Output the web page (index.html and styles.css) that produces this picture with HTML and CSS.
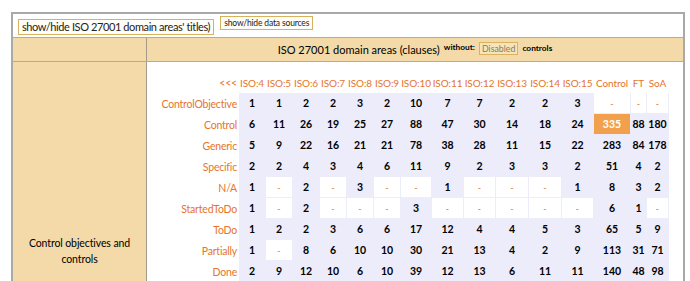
FILE: index.html
```html
<!DOCTYPE html>
<html>
<head>
<meta charset="utf-8">
<link rel="stylesheet" href="styles.css">
</head>
<body>
<div class="frame">
  <div class="toolbar">
    <button class="btn btn-lg">show/hide ISO 27001 domain areas' titles)</button>
    <button class="btn btn-sm">show/hide data sources</button>
  </div>
  <div class="band">
    <div class="side"></div>
    <div class="title">ISO 27001 domain areas (clauses) <span class="sup">without:</span> <button class="dis">Disabled</button> <span class="ctl">controls</span></div>
  </div>
  <div class="body">
    <div class="side side-label">Control objectives and controls</div>
    <div class="main">
      <div class="grid">
        <div class="l">&lt;&lt;&lt;</div>
        <div class="h">ISO:4</div><div class="h">ISO:5</div><div class="h">ISO:6</div><div class="h">ISO:7</div><div class="h">ISO:8</div><div class="h">ISO:9</div><div class="h">ISO:10</div><div class="h">ISO:11</div><div class="h">ISO:12</div><div class="h">ISO:13</div><div class="h">ISO:14</div><div class="h">ISO:15</div><div class="h">Control</div><div class="h">FT</div><div class="h">SoA</div>

        <div class="l">ControlObjective</div>
        <div class="c">1</div><div class="c">1</div><div class="c">2</div><div class="c">2</div><div class="c">3</div><div class="c">2</div><div class="c">10</div><div class="c">7</div><div class="c">7</div><div class="c">2</div><div class="c">2</div><div class="c">3</div><div class="c w">-</div><div class="c w">-</div><div class="c w">-</div>

        <div class="l">Control</div>
        <div class="c">6</div><div class="c">11</div><div class="c">26</div><div class="c">19</div><div class="c">25</div><div class="c">27</div><div class="c">88</div><div class="c">47</div><div class="c">30</div><div class="c">14</div><div class="c">18</div><div class="c">24</div><div class="c hi">335</div><div class="c">88</div><div class="c">180</div>

        <div class="l">Generic</div>
        <div class="c">5</div><div class="c">9</div><div class="c">22</div><div class="c">16</div><div class="c">21</div><div class="c">21</div><div class="c">78</div><div class="c">38</div><div class="c">28</div><div class="c">11</div><div class="c">15</div><div class="c">22</div><div class="c">283</div><div class="c">84</div><div class="c">178</div>

        <div class="l">Specific</div>
        <div class="c">2</div><div class="c">2</div><div class="c">4</div><div class="c">3</div><div class="c">4</div><div class="c">6</div><div class="c">11</div><div class="c">9</div><div class="c">2</div><div class="c">3</div><div class="c">3</div><div class="c">2</div><div class="c">51</div><div class="c">4</div><div class="c">2</div>

        <div class="l">N/A</div>
        <div class="c">1</div><div class="c w">-</div><div class="c">2</div><div class="c w">-</div><div class="c">3</div><div class="c w">-</div><div class="c w">-</div><div class="c">1</div><div class="c w">-</div><div class="c w">-</div><div class="c w">-</div><div class="c">1</div><div class="c">8</div><div class="c">3</div><div class="c">2</div>

        <div class="l">StartedToDo</div>
        <div class="c">1</div><div class="c w">-</div><div class="c">2</div><div class="c w">-</div><div class="c w">-</div><div class="c w">-</div><div class="c">3</div><div class="c w">-</div><div class="c w">-</div><div class="c w">-</div><div class="c w">-</div><div class="c w">-</div><div class="c">6</div><div class="c">1</div><div class="c w">-</div>

        <div class="l">ToDo</div>
        <div class="c">1</div><div class="c">2</div><div class="c">2</div><div class="c">3</div><div class="c">6</div><div class="c">6</div><div class="c">17</div><div class="c">12</div><div class="c">4</div><div class="c">4</div><div class="c">5</div><div class="c">3</div><div class="c">65</div><div class="c">5</div><div class="c">9</div>

        <div class="l">Partially</div>
        <div class="c">1</div><div class="c w">-</div><div class="c">8</div><div class="c">6</div><div class="c">10</div><div class="c">10</div><div class="c">30</div><div class="c">21</div><div class="c">13</div><div class="c">4</div><div class="c">2</div><div class="c">9</div><div class="c">113</div><div class="c">31</div><div class="c">71</div>

        <div class="l">Done</div>
        <div class="c">2</div><div class="c">9</div><div class="c">12</div><div class="c">10</div><div class="c">6</div><div class="c">10</div><div class="c">39</div><div class="c">12</div><div class="c">13</div><div class="c">6</div><div class="c">11</div><div class="c">11</div><div class="c">140</div><div class="c">48</div><div class="c">98</div>
      </div>
    </div>
  </div>
</div>
</body>
</html>
```

FILE: styles.css
```css
* { box-sizing: border-box; }
html, body { margin: 0; padding: 0; background: #fff; }
body {
  font-family: Lato, "Open Sans", sans-serif;
  color: #000;
  overflow: hidden;
}
.frame {
  margin: 12px 5px 0 11px;
  border: 2px solid #a9a9a9;
  border-bottom: 0;
}
.toolbar {
  height: 24px;
  display: flex;
  align-items: flex-start;
  gap: 6px;
  padding: 2px 0 0 5px;
  border-bottom: 1px solid #b4ab9a;
}
.btn {
  font-family: inherit;
  background: #fffdf7;
  border: 1px solid #d6b15e;
  border-radius: 0;
  color: #222;
  margin: 0;
  cursor: pointer;
}
.btn-lg {
  margin-top: 3px;
  font-size: 11px;
  letter-spacing: -0.4px;
  line-height: 14px;
  padding: 0 3px;
}
.btn-sm {
  font-size: 8.5px;
  letter-spacing: -0.15px;
  line-height: 12px;
  padding: 0 3px;
}
.band, .body {
  display: flex;
}
.band {
  height: 24px;
  background: #f3daa8;
  border-bottom: 1px solid #b4ab9a;
}
.side {
  width: 134px;
  flex: none;
  background: #f3daa8;
  border-right: 1px solid #a39a88;
}
.title {
  flex: 1;
  display: flex;
  align-items: center;
  justify-content: center;
  gap: 4px;
  font-size: 11px;
}
.sup {
  font-size: 8.3px;
  font-weight: 700;
  align-self: flex-start;
  margin-top: 4px;
}
.dis {
  font-family: inherit;
  font-size: 8.8px;
  line-height: 11px;
  padding: 0 2px;
  margin: 0 0 2px;
  color: #8c7b58;
  background: #f7e4ba;
  border: 1px solid #d9b262;
  border-radius: 0;
}
.ctl {
  font-size: 8.3px;
  font-weight: 700;
  margin-bottom: 4px;
}
.body {
  min-height: 378px;
}
.side-label {
  display: flex;
  align-items: center;
  justify-content: center;
  text-align: center;
  padding: 0 14px;
  font-size: 10.5px;
  letter-spacing: -0.1px;
  line-height: 16px;
}
.main {
  flex: 1;
  display: flex;
  justify-content: center;
  align-items: flex-start;
  padding-top: 11px;
}
.grid {
  display: grid;
  grid-template-columns: 78px repeat(6, 27px) 31px 32px 32px 33px 33px 32px 37px 16px 22px;
  grid-template-rows: 20px;
  grid-auto-rows: 21px;
}
.l, .h {
  display: flex;
  align-items: center;
  color: #e6742c;
  white-space: nowrap;
}
.l {
  justify-content: flex-end;
  padding-right: 2px;
  font-size: 10.5px;
  letter-spacing: -0.2px;
}
.h {
  justify-content: center;
  font-size: 10px;
  letter-spacing: -0.1px;
  padding-right: 1px;
}
.c {
  display: flex;
  align-items: center;
  justify-content: center;
  background: #ececfb;
  border-right: 1px solid #ececfb;
  border-bottom: 1px solid #ececfb;
  font-size: 10.5px;
  font-weight: 700;
}
.c.w {
  background: #fff;
  color: #e6742c;
  font-weight: 400;
  font-size: 9px;
}
.c.hi {
  background: #f1a04d;
  color: #fff;
}
```
